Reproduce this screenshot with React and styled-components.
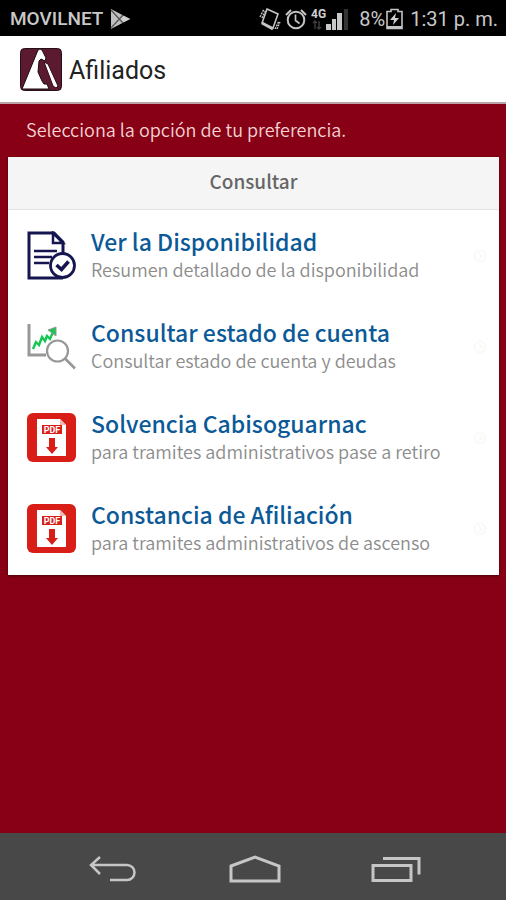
import styled, { createGlobalStyle } from "styled-components";

const GlobalStyle = createGlobalStyle`
  * {
    box-sizing: border-box;
  }
  body {
    margin: 0;
    background-color: #870015;
    font-family: "Noto Sans CJK SC", "Noto Sans", sans-serif;
  }
`;

const Screen = styled.div`
  min-height: 100vh;
  display: flex;
  flex-direction: column;
  background-color: #870015;
`;
const StatusBar = styled.div`
  height: 36px;
  padding: 2px 8px 0 10px;
  display: flex;
  align-items: center;
  justify-content: space-between;
  background-color: #000;
  color: #c8c8c8;
  font-family: Roboto, sans-serif;
`;
const StatusGroup = styled.div`
  display: flex;
  align-items: center;
  gap: ${(props) => props.$gap}px;
`;
const Carrier = styled.span`
  font-size: 19px;
  line-height: 24px;
  font-weight: 500;
`;
const StatusText = styled.span`
  font-size: 20px;
  line-height: 24px;
  white-space: nowrap;
`;
const Header = styled.header`
  height: 68px;
  padding: 0 20px;
  display: flex;
  align-items: center;
  gap: 7px;
  background-color: #fff;
  border-bottom: 2px solid #b9a3a6;
`;
const AppName = styled.h1`
  margin: 0;
  padding-top: 4px;
  font-family: Roboto, sans-serif;
  font-size: 25px;
  line-height: 30px;
  font-weight: 400;
  color: #222;
`;
const Main = styled.main`
  flex: 1;
  padding: 0 7px 0 8px;
`;
const Hint = styled.p`
  margin: 0;
  padding: 11px 18px 14px;
  font-size: 18px;
  line-height: 28px;
  font-weight: 350;
  color: #f3d3d3;
`;
const Card = styled.section`
  background-color: #fff;
  box-shadow: 0 1px 2px #4a000b;
`;
const CardTitle = styled.h2`
  margin: 0;
  height: 53px;
  line-height: 48px;
  text-align: center;
  font-size: 19px;
  font-weight: 500;
  color: #666;
  background-color: #f5f5f5;
  border-bottom: 1px solid #e4e4e4;
`;
const List = styled.ul`
  margin: 0;
  padding: 0 0 1px;
  list-style: none;
`;
const Option = styled.button`
  width: 100%;
  height: 91px;
  padding: 0 12px 0 19px;
  display: flex;
  align-items: center;
  gap: 15px;
  border: none;
  background: none;
  font-family: inherit;
  text-align: left;
  cursor: pointer;
`;
const OptionText = styled.span`
  flex: 1;
  display: flex;
  flex-direction: column;
  padding-bottom: 2px;
  white-space: nowrap;
`;
const OptionTitle = styled.span`
  font-size: 23px;
  line-height: 28px;
  font-weight: 500;
  color: #0b5a97;
`;
const OptionDetail = styled.span`
  font-size: 18px;
  line-height: 28px;
  font-weight: 350;
  color: #8c8c8c;
`;
const NavBar = styled.nav`
  height: 67px;
  padding: 4px 60px 0 63px;
  display: flex;
  align-items: center;
  justify-content: space-between;
  background-color: #484848;
`;
const NavButton = styled.button`
  width: 100px;
  height: 48px;
  padding: 0;
  display: flex;
  align-items: center;
  justify-content: center;
  border: none;
  background: none;
`;

const PlayIcon = () => (
  <svg width="21" height="20" viewBox="0 0 21 20">
    <path d="M1 0 20 10 1 20z" fill="#c0c0c0" />
    <path d="M1 1l12 13M1 19 13 6M15 10h5" stroke="#555" strokeWidth="1.3" />
    <path d="M14 7l6 3-6 3-3-3z" fill="#d0d0d0" />
  </svg>
);

const VibrateIcon = () => (
  <svg width="22" height="24" viewBox="0 0 22 24" fill="none" stroke="#c4c4c4">
    <path d="M8 2 19 7 14 21 3 16z" strokeWidth="1.6" />
    <path d="M3 16l11 6" strokeWidth="3" />
    <path d="M1 10l4-8M3 11l4-8M16 22l4-8M18 22l3-7" strokeWidth="1.4" strokeDasharray="2 1" />
  </svg>
);

const AlarmIcon = () => (
  <svg width="22" height="22" viewBox="0 0 22 22" fill="none" stroke="#c4c4c4" strokeWidth="2">
    <circle cx="11" cy="12" r="8.3" />
    <path d="M10.500 6.500v6l4 3" strokeWidth="1.7" />
    <path d="M1 7l5-5M21 7l-5-5" />
  </svg>
);

const SignalIcon = () => (
  <svg width="41" height="24" viewBox="0 0 41 24">
    <text x="0" y="11" fill="#d0d0d0" fontFamily="Roboto, sans-serif" fontSize="12" fontWeight="700">
      4G
    </text>
    <path d="M4 14v8M2 16l2-2 2 2M8 14v8M6 20l2 2 2-2" fill="none" stroke="#3c3c3c" strokeWidth="1.5" />
    <path d="M15 17h5v6h-5zM21 12h4v11h-4zM26 6h5v17h-5z" fill="#c8c8c8" />
    <path d="M33 2h4v21h-4z" fill="#333" />
  </svg>
);

const BatteryIcon = () => (
  <svg width="17" height="22" viewBox="0 0 17 22">
    <path d="M1 3.500h4v-2h7v2h4v17H1z" fill="none" stroke="#c4c4c4" strokeWidth="1.6" />
    <path d="M10 5 4 12h4l-1 5 6-7H9z" fill="#d0d0d0" />
    <path d="M1 18h15v3H1z" fill="#c4c4c4" />
  </svg>
);

const Logo = () => (
  <svg width="42" height="43" viewBox="0 0 42 43">
    <rect x="0.500" y="0.500" width="41" height="42" rx="4" fill="#5c1a30" stroke="#241018" />
    <path
      d="M18 2q2-2 4 0l4 8-1 3-4-2-2 2-1 11 4 9 2 3h3l2 5H2z"
      fill="#fff"
      stroke="#170a10"
      strokeWidth="1"
    />
    <path d="M24 14l4 2 10 22-2 2-3-2z" fill="#fff" stroke="#2d0b18" strokeWidth="1" />
  </svg>
);

const DocumentIcon = () => (
  <svg width="49" height="49" viewBox="0 0 49 49" fill="none" stroke="#15164f">
    <path d="M36 47H2V2h25l9 9v13" strokeWidth="3" />
    <path d="M26 2v10h10z" strokeWidth="2.500" />
    <path d="M7 20h23M7 26h18M7 32h15" strokeWidth="2.500" />
    <circle cx="35.500" cy="34.500" r="12" fill="#fff" strokeWidth="2.800" />
    <path d="M29.500 34l5 4.500 7-8" strokeWidth="3.600" />
  </svg>
);

const ChartIcon = () => (
  <svg width="49" height="49" viewBox="0 0 49 49" fill="none" stroke="#979797">
    <path d="M2 2v31h17" strokeWidth="3" />
    <circle cx="30.500" cy="29" r="10.500" strokeWidth="2.200" />
    <path d="M38 36.500l10 10" strokeWidth="2.600" />
    <path d="M6 27l3-7 3 3 3-8 3 4 2-5 3 3 3-7" stroke="#17c653" strokeWidth="2.400" />
    <path d="M21 8l8-3v9z" fill="#17c653" />
  </svg>
);

const PdfIcon = () => (
  <svg width="49" height="49" viewBox="0 0 49 49">
    <rect width="49" height="49" rx="6" fill="#d91e18" />
    <path d="M10 6h23l6 6v31H10z" fill="#fff" />
    <path d="M33 6v6h6z" fill="#f1b5b2" />
    <path d="M15 12h20v9H15z" fill="#d91e18" />
    <text
      x="25"
      y="20"
      fill="#fff"
      textAnchor="middle"
      fontFamily="Roboto, sans-serif"
      fontSize="9"
      fontWeight="700"
    >
      PDF
    </text>
    <path d="M22 25h6v9h3l-6 7-6-7h3z" fill="#d91e18" />
  </svg>
);

const RowMark = () => (
  <svg width="14" height="14" viewBox="0 0 14 14" fill="none" stroke="#f9f9f6" strokeWidth="2">
    <circle cx="7" cy="7" r="5.500" />
    <path d="M6 4l3 3-3 3" />
  </svg>
);

const options = [
  {
    icon: DocumentIcon,
    title: "Ver la Disponibilidad",
    detail: "Resumen detallado de la disponibilidad",
  },
  {
    icon: ChartIcon,
    title: "Consultar estado de cuenta",
    detail: "Consultar estado de cuenta y deudas",
  },
  {
    icon: PdfIcon,
    title: "Solvencia Cabisoguarnac",
    detail: "para tramites administrativos pase a retiro",
  },
  {
    icon: PdfIcon,
    title: "Constancia de Afiliación",
    detail: "para tramites administrativos de ascenso",
  },
];

const App = () => {
  return (
    <Screen>
      <GlobalStyle />
      <StatusBar>
        <StatusGroup $gap={7}>
          <Carrier>MOVILNET</Carrier>
          <PlayIcon />
        </StatusGroup>
        <StatusGroup $gap={7}>
          <StatusGroup $gap={4}>
            <VibrateIcon />
            <AlarmIcon />
            <SignalIcon />
          </StatusGroup>
          <StatusGroup $gap={1}>
            <StatusText>8%</StatusText>
            <BatteryIcon />
          </StatusGroup>
          <StatusText>1:31 p. m.</StatusText>
        </StatusGroup>
      </StatusBar>
      <Header>
        <Logo />
        <AppName>Afiliados</AppName>
      </Header>
      <Main>
        <Hint>Selecciona la opción de tu preferencia.</Hint>
        <Card>
          <CardTitle>Consultar</CardTitle>
          <List>
            {options.map(({ icon: Icon, title, detail }) => (
              <li key={title}>
                <Option type="button">
                  <Icon />
                  <OptionText>
                    <OptionTitle>{title}</OptionTitle>
                    <OptionDetail>{detail}</OptionDetail>
                  </OptionText>
                  <RowMark />
                </Option>
              </li>
            ))}
          </List>
        </Card>
      </Main>
      <NavBar>
        <NavButton type="button" aria-label="Atrás">
          <svg width="48" height="28" viewBox="0 0 48 28" fill="none" stroke="#c6c6c6" strokeWidth="2.500">
            <path d="M11 2 2 10l9 9M2 10h36a7.500 7.500 0 0 1 0 15H21" />
          </svg>
        </NavButton>
        <NavButton type="button" aria-label="Inicio">
          <svg width="52" height="28" viewBox="0 0 52 28" fill="none" stroke="#c6c6c6" strokeWidth="3">
            <path d="M2 11 26 2l24 9v15H2z" />
          </svg>
        </NavButton>
        <NavButton type="button" aria-label="Recientes">
          <svg width="50" height="28" viewBox="0 0 50 28" fill="none" stroke="#c6c6c6" strokeWidth="3">
            <path d="M2 10.500h38v15H2z" />
            <path d="M12 3.500h36v16" />
          </svg>
        </NavButton>
      </NavBar>
    </Screen>
  );
};

export default App;
